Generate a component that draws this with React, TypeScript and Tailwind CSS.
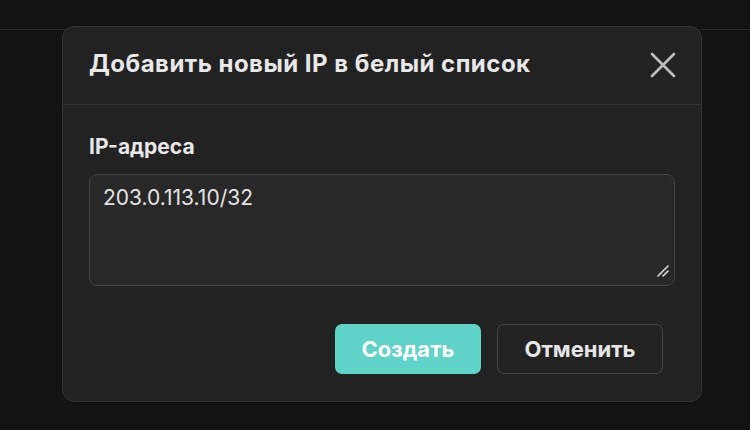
export default function App() {
  return (
    <div className="flex h-[430px] w-[750px] flex-col overflow-hidden bg-[#131313] font-['Inter',sans-serif]">
      <div className="h-[30px] shrink-0 border-b border-[#262626]" />
      <div className="relative flex-1">
        <div className="absolute left-[62px] top-[-4px] w-[640px] rounded-[12px] border border-[#333333] bg-[#222222]">
          <div className="flex h-[78px] items-center justify-between border-b border-[#333333] pl-[26px] pr-[25px]">
            <h2 className="mt-[-4px] text-[24px] font-bold tracking-[0.02em] text-[#e8e8e8]">Добавить новый IP в белый список</h2>
            <button className="mt-[-2px] text-[#bdbdbd]">
              <svg width="26" height="26" viewBox="0 0 26 26" fill="none" stroke="currentColor" strokeWidth="2.6" strokeLinecap="round">
                <path d="M2 2 L24 24 M24 2 L2 24" />
              </svg>
            </button>
          </div>
          <div className="px-[26px] pt-[28px]">
            <label className="block text-[21px] font-bold leading-[28px] text-[#e8e8e8]">IP-адреса</label>
            <div className="relative mt-[13px]">
              <textarea
                className="block h-[112px] w-full resize-none rounded-[8px] border border-[#444444] bg-[#282828] px-[13px] py-[8px] text-[21px] leading-[30px] text-[#e4e4e4] outline-none"
                defaultValue="203.0.113.10/32"
              />
              <svg className="absolute bottom-[9px] right-[6px]" width="12" height="12" viewBox="0 0 12 12" stroke="#dcdcdc" strokeWidth="1.6" strokeLinecap="round">
                <path d="M1 11 L11 1 M6 11 L11 6" />
              </svg>
            </div>
          </div>
          <div className="flex justify-end gap-[16px] pb-[27px] pr-[38px] pt-[38px]">
            <button className="h-[50px] w-[146px] rounded-[7px] bg-[#5fd3c8] text-[22px] font-bold text-white">Создать</button>
            <button className="h-[50px] w-[166px] rounded-[7px] border border-[#474747] text-[22px] font-bold text-[#e6e6e6]">Отменить</button>
          </div>
        </div>
      </div>
    </div>
  )
}
